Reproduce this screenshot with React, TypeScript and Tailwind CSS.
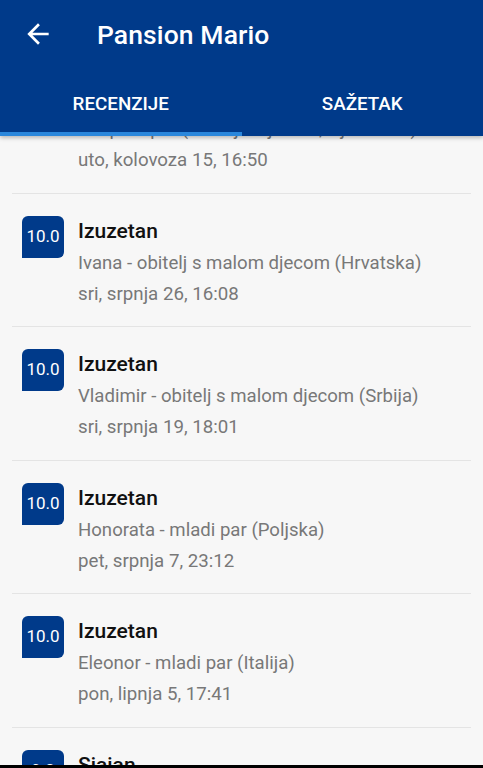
import { useState } from "react";

type Review = {
  score: string;
  label: string;
  guest: string;
  date: string;
};

const reviews: Review[] = [
  {
    score: "10.0",
    label: "Izuzetan",
    guest: "Kasper - par (obitelj s djecom, Njemačka)",
    date: "uto, kolovoza 15, 16:50",
  },
  {
    score: "10.0",
    label: "Izuzetan",
    guest: "Ivana - obitelj s malom djecom (Hrvatska)",
    date: "sri, srpnja 26, 16:08",
  },
  {
    score: "10.0",
    label: "Izuzetan",
    guest: "Vladimir - obitelj s malom djecom (Srbija)",
    date: "sri, srpnja 19, 18:01",
  },
  {
    score: "10.0",
    label: "Izuzetan",
    guest: "Honorata - mladi par (Poljska)",
    date: "pet, srpnja 7, 23:12",
  },
  {
    score: "10.0",
    label: "Izuzetan",
    guest: "Eleonor - mladi par (Italija)",
    date: "pon, lipnja 5, 17:41",
  },
  {
    score: "9.0",
    label: "Sjajan",
    guest: "Marko - par (Slovenija)",
    date: "ned, lipnja 4, 10:22",
  },
];

function BackArrow() {
  return (
    <svg width="32" height="32" viewBox="0 0 24 24" fill="white" aria-hidden>
      <path d="M20 11H7.83l5.59-5.59L12 4l-8 8 8 8 1.41-1.41L7.83 13H20v-2z" />
    </svg>
  );
}

function ReviewRow({ review, first }: { review: Review; first?: boolean }) {
  return (
    <div
      className={[
        "mx-3 h-[133.5px] shrink-0 border-b border-[#e4e4e4] pl-[10px] pt-[22px] flex gap-[14px]",
        first ? "-mt-[76px]" : "",
      ].join(" ")}
    >
      <div className="w-[42px] h-[42px] shrink-0 bg-[#003a8a] rounded-[6px] rounded-bl-none flex items-center justify-center text-white text-[17px]">
        {review.score}
      </div>
      <div className="pt-[2px] min-w-0">
        <div className="text-[21px] leading-[26px] font-medium text-[#111]">
          {review.label}
        </div>
        <div className="mt-[5px] text-[18.6px] leading-[28px] text-[#787878] whitespace-nowrap">
          {review.guest}
        </div>
        <div className="mt-[3px] text-[18.7px] leading-[28px] text-[#787878]">
          {review.date}
        </div>
      </div>
    </div>
  );
}

export default function App() {
  const [tab, setTab] = useState(0);

  return (
    <div
      className="h-screen w-full flex flex-col bg-[#f7f7f7] overflow-hidden"
      style={{ fontFamily: "Roboto, 'Noto Sans', sans-serif" }}
    >
      {/* App bar + tabs */}
      <header className="relative z-10 h-[136px] shrink-0 bg-[#003a8a] flex flex-col shadow-[0_2px_4px_rgba(0,0,0,0.25)]">
        <div className="h-[70px] flex items-center">
          <button className="ml-[22px] mt-[-2px]" aria-label="Natrag">
            <BackArrow />
          </button>
          <h1 className="ml-[43px] text-white text-[26.5px] font-medium tracking-[0.1px]">
            Pansion Mario
          </h1>
        </div>
        <div className="relative flex-1 flex">
          {["RECENZIJE", "SAŽETAK"].map((t, i) => (
            <button
              key={t}
              onClick={() => setTab(i)}
              className="w-1/2 flex items-center justify-center pt-[2px] text-white text-[18.8px] font-medium"
            >
              {t}
            </button>
          ))}
          <div
            className="absolute bottom-0 h-[4px] w-1/2 bg-[#2a87dc] transition-all"
            style={{ left: tab === 0 ? "0%" : "50%" }}
          />
        </div>
      </header>

      {/* Review list */}
      <main className="flex-1 overflow-hidden flex flex-col">
        {reviews.map((r, i) => (
          <ReviewRow key={i} review={r} first={i === 0} />
        ))}
      </main>

      <div className="h-[3px] shrink-0 bg-black" />
    </div>
  );
}
